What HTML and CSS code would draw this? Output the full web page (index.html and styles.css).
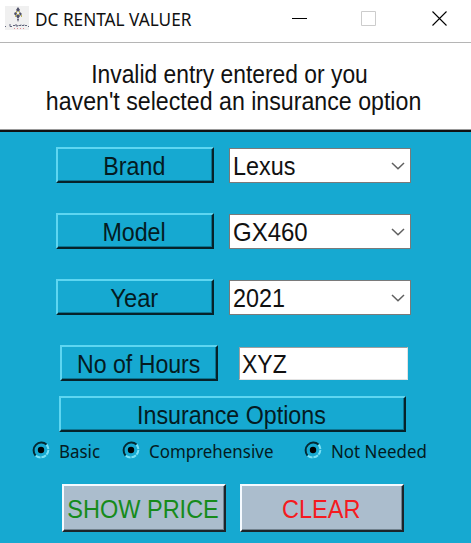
FILE: index.html
```html
<!DOCTYPE html>
<html lang="en">
<head>
<meta charset="utf-8">
<title>DC RENTAL VALUER</title>
<link rel="stylesheet" href="styles.css">
</head>
<body>
<header class="titlebar">
  <svg class="logo" width="24" height="24" viewBox="0 0 24 24">
    <path fill="#f0f0f0" d="M0 0h24v24H0z"/>
    <path d="M13 1l2 3-2 2-2-2zM10 6l2 1-1 3-2-2zM15 6l2 2-2 2-1-3zM11 10l2-2 2 2-2 3zM12 13h2l-1 3z" fill="#4e5068"/>
    <path d="M11 5h1v2h-1zM14 5h1v2h-1zM12 8h2v1h-2zM10 9h1v2h-1zM16 9h1v2h-1z" fill="#bdb65d"/>
    <path d="M0 20.500h1M5 18v2.500h2M8 19.500h2M11 18v2h2v-1M14 19.500h2v-1M17 19.500h2v-1M20 19.500h2M23 20.500h1" stroke="#60657c" fill="none"/>
    <path d="M9 22.500h1M12 22.500h1M15 22.500h1M18 22.500h1" stroke="#df8990"/>
  </svg>
  <h1 class="title"><span>DC RENTAL VALUER</span></h1>
  <svg class="controls" width="156" height="15" viewBox="0 0 156 15" fill="none">
    <path d="M0 7.500h15" stroke="#000"/>
    <path d="M69.500.500h14v14h-14z" stroke="#ccc"/>
    <path d="M140.500 .500l14 14M154.500 .500l-14 14" stroke="#000" stroke-width="1.100"/>
  </svg>
</header>
<p class="message"><span class="line-one">Invalid entry entered or you</span><span class="line-two">haven't selected an insurance option</span></p>
<main class="form">
  <div class="row">
    <div class="label"><span>Brand</span></div>
    <div class="select"><span>Lexus</span><svg width="14" height="8" viewBox="0 0 14 8"><path d="M1 1l6 5.800L13 1"/></svg></div>
  </div>
  <div class="row">
    <div class="label"><span>Model</span></div>
    <div class="select"><span class="gx">GX460</span><svg width="14" height="8" viewBox="0 0 14 8"><path d="M1 1l6 5.800L13 1"/></svg></div>
  </div>
  <div class="row">
    <div class="label"><span class="year">Year</span></div>
    <div class="select"><span>2021</span><svg width="14" height="8" viewBox="0 0 14 8"><path d="M1 1l6 5.800L13 1"/></svg></div>
  </div>
  <div class="row hours">
    <div class="label"><span>No of Hours</span></div>
    <div class="entry"><span>XYZ</span></div>
  </div>
  <div class="label insurance"><span>Insurance Options</span></div>
  <div class="options">
    <div class="option basic"><svg class="radio" width="18" height="18" viewBox="0 0 18 18"><path class="light" d="M14.500 3.500A7.800 7.800 0 0 1 3.500 14.500"/><path class="dark" d="M3.500 14.500A7.800 7.800 0 0 1 14.500 3.500"/><circle cx="9" cy="9" r="3.200"/></svg><span>Basic</span></div>
    <div class="option comprehensive"><svg class="radio" width="18" height="18" viewBox="0 0 18 18"><path class="light" d="M14.500 3.500A7.800 7.800 0 0 1 3.500 14.500"/><path class="dark" d="M3.500 14.500A7.800 7.800 0 0 1 14.500 3.500"/><circle cx="9" cy="9" r="3.200"/></svg><span>Comprehensive</span></div>
    <div class="option none"><svg class="radio" width="18" height="18" viewBox="0 0 18 18"><path class="light" d="M14.500 3.500A7.800 7.800 0 0 1 3.500 14.500"/><path class="dark" d="M3.500 14.500A7.800 7.800 0 0 1 14.500 3.500"/><circle cx="9" cy="9" r="3.200"/></svg><span>Not Needed</span></div>
  </div>
  <div class="actions">
    <button class="button show"><span>SHOW PRICE</span></button>
    <button class="button clear"><span>CLEAR</span></button>
  </div>
</main>
</body>
</html>
```
FILE: styles.css
```css
* { box-sizing: border-box; }
body {
  margin: 0;
  width: 471px;
  height: 543px;
  overflow: hidden;
  display: flex;
  flex-direction: column;
  background: #16a9d1;
  color: #111;
  font: 25px/28px "Liberation Sans", Arial, sans-serif;
}
span { display: inline-block; white-space: nowrap; }
.titlebar {
  display: flex;
  align-items: flex-start;
  height: 43px;
  padding: 6px 0 0 5px;
  background: #fff;
  border-bottom: 1px solid #b5b5b5;
}
.title {
  width: 257px;
  margin: 0 0 0 6px;
  font: 400 18.5px/26px "Noto Sans", "Open Sans", sans-serif;
  white-space: nowrap;
}
.title span { transform: scaleX(.93); transform-origin: left; }
.controls { margin-top: 5px; }
.message {
  display: flex;
  flex-direction: column;
  align-items: center;
  height: 89px;
  margin: 0;
  padding: 18px 5px 0 0;
  background: #fff;
  border-bottom: 2px solid #111;
  box-shadow: inset 0 -1px #999;
  line-height: 27px;
}
.line-one { transform: translateX(-4px) scaleX(.913); }
.line-two { transform: translateX(1px) scaleX(.927); }
.form { padding-top: 15px; }
.row { display: flex; gap: 15px; margin: 0 0 30px 56px; }
.label {
  display: flex;
  justify-content: center;
  width: 158px;
  height: 36px;
  padding-top: 3px;
  border: 2px solid;
  border-color: #5ed6f1 #06222a #06222a #5ed6f1;
  box-shadow: inset -1px -1px #0c7592;
  color: #041b22;
}
.label span { transform: translateX(-1px) scaleX(.93); }
.label .year { transform: translateX(-1px) scaleX(.95); }
.select {
  display: flex;
  align-items: center;
  justify-content: space-between;
  width: 182px;
  height: 35px;
  margin-top: 1px;
  padding: 0 5px 0 3px;
  background: #fff;
  border: 1px solid #7a7a7a;
}
.select span { transform: scaleX(.935); transform-origin: left; }
.select .gx { transform: scaleX(.96); }
.select path { fill: none; stroke: #606060; stroke-width: 1.5; }
.hours { margin: 0 0 15px 60px; gap: 21px; }
.hours .label span { transform: scaleX(.925); }
.entry {
  width: 169px;
  height: 33px;
  margin-top: 2px;
  padding: 2px 0 0 2px;
  background: #fff;
  border: 1px solid;
  border-color: #a0a0a0 #e3e3e3 #e3e3e3 #a0a0a0;
}
.entry span { transform: scaleX(.92); transform-origin: left; }
.insurance { width: 347px; margin-left: 59px; }
.options {
  display: flex;
  height: 38px;
  margin: 5px 0 0 32px;
  color: #041b22;
  font: 17.5px/29px "Noto Sans", "Open Sans", sans-serif;
}
.option { display: flex; gap: 9px; }
.option span { transform: scaleX(.967); transform-origin: left; }
.radio { flex: none; margin-top: 4px; }
.radio .dark { fill: none; stroke: #062a33; stroke-width: 2; }
.radio .light { fill: none; stroke: #79e0f5; stroke-width: 2; stroke-dasharray: 5 .8; }
.basic { width: 90px; }
.comprehensive { width: 182px; }
.actions { display: flex; gap: 14px; margin: 9px 0 0 62px; }
.button {
  width: 164px;
  height: 48px;
  padding: 1px 0 0;
  background: #abbdcd;
  border: 2px solid;
  border-color: #f5faff #1c242a #1c242a #f5faff;
  box-shadow: inset -1px -1px #71818d;
  font: inherit;
}
.button span { margin: 0 -10px; transform: translateX(-.5px) scaleX(.94); }
.show { color: #168b1b; }
.clear { color: #f51a20; }
```
